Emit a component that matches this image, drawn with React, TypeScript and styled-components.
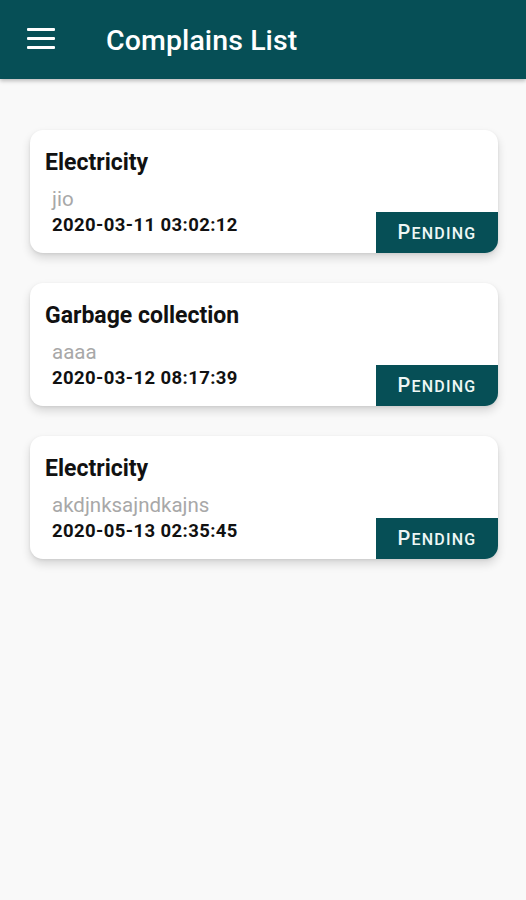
import React from 'react';
import styled, { createGlobalStyle } from 'styled-components';

type Complaint = {
  category: string;
  detail: string;
  date: string;
  status: string;
};

const complaints: Complaint[] = [
  { category: 'Electricity', detail: 'jio', date: '2020-03-11 03:02:12', status: 'Pending' },
  { category: 'Garbage collection', detail: 'aaaa', date: '2020-03-12 08:17:39', status: 'Pending' },
  { category: 'Electricity', detail: 'akdjnksajndkajns', date: '2020-05-13 02:35:45', status: 'Pending' },
];

const GlobalStyle = createGlobalStyle`
  html, body {
    margin: 0;
    padding: 0;
    background: #f9f9f9;
    font-family: Roboto, "Liberation Sans", Arial, sans-serif;
  }
`;

const Page = styled.div`
  min-height: 900px;
  background: #f9f9f9;
`;

const AppBar = styled.header`
  height: 79px;
  background: #064f56;
  display: flex;
  align-items: center;
  padding-left: 27px;
  box-shadow: 0 2px 4px rgba(0, 0, 0, 0.25);
  box-sizing: border-box;
`;

const MenuButton = styled.button`
  width: 28px;
  height: 21px;
  padding: 0;
  border: none;
  background: none;
  display: flex;
  flex-direction: column;
  justify-content: space-between;
  margin-top: -3px;
  cursor: pointer;

  span {
    display: block;
    height: 3px;
    background: #fff;
    border-radius: 1px;
  }
`;

const Title = styled.h1`
  margin: 2px 0 0 51px;
  color: #fff;
  font-size: 28.5px;
  font-weight: 500;
  letter-spacing: 0.1px;
`;

const List = styled.main`
  display: flex;
  flex-direction: column;
  gap: 30px;
  padding: 51px 28px 0 30px;
`;

const Card = styled.article`
  display: flex;
  justify-content: space-between;
  height: 123px;
  background: #fff;
  border-radius: 13px;
  box-shadow: 0 5px 10px rgba(0, 0, 0, 0.14), 0 1px 3px rgba(0, 0, 0, 0.08);
  overflow: hidden;
`;

const Info = styled.div`
  display: flex;
  flex-direction: column;
  padding: 19px 0 0 15px;
`;

const Category = styled.div`
  font-size: 23px;
  font-weight: 700;
  color: #111;
  line-height: 28px;
`;

const Detail = styled.div`
  font-size: 20.5px;
  color: #a8a8a8;
  margin: 11px 0 0 7px;
  line-height: 22px;
`;

const Stamp = styled.div`
  font-size: 18.5px;
  font-weight: 700;
  color: #111;
  margin: 4px 0 0 7px;
  line-height: 22px;
  letter-spacing: 0.4px;
`;

const StatusBadge = styled.div`
  align-self: flex-end;
  width: 122px;
  height: 41px;
  background: #064f56;
  display: flex;
  align-items: center;
  justify-content: center;
`;

const StatusLabel = styled.span`
  display: block;
  color: #eef7f5;
  font-family: Roboto, "Liberation Sans", sans-serif;
  font-weight: 500;
  font-size: 16px;
  line-height: 20px;
  text-transform: uppercase;
  letter-spacing: 1.2px;

  &::first-letter {
    font-size: 20px;
  }
`;

export default function App() {
  return (
    <Page>
      <GlobalStyle />
      <AppBar>
        <MenuButton aria-label="menu">
          <span />
          <span />
          <span />
        </MenuButton>
        <Title>Complains List</Title>
      </AppBar>
      <List>
        {complaints.map((c, i) => (
          <Card key={i}>
            <Info>
              <Category>{c.category}</Category>
              <Detail>{c.detail}</Detail>
              <Stamp>{c.date}</Stamp>
            </Info>
            <StatusBadge>
              <StatusLabel>{c.status}</StatusLabel>
            </StatusBadge>
          </Card>
        ))}
      </List>
    </Page>
  );
}
